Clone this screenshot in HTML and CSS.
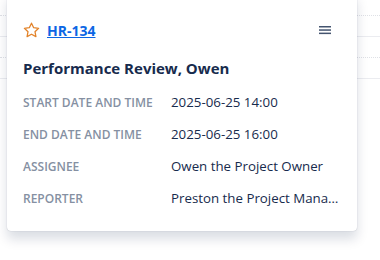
FILE: index.html
```html
<!DOCTYPE html>
<html lang="en">
<head>
    <meta charset="UTF-8">
    <meta name="viewport" content="width=device-width, initial-scale=1.0">
    <title>HR-134</title>

    <link rel="stylesheet" href="styles.css">
</head>
<body>
    <div class="board">
        <div class="board-line dotted"></div>
        <div class="board-line"></div>
        <div class="board-line dotted"></div>
        <div class="board-line"></div>
    </div>

    <div class="card">
        <div class="card-header">
            <div class="card-key">
                <svg class="star" width="17" height="17" viewBox="0 0 16 16">
                    <path d="M8 1.1l2.05 4.25 4.65.6-3.42 3.2.88 4.62L8 11.5l-4.16 2.27.88-4.62L1.3 5.95l4.65-.6z" fill="none" stroke="#e2832a" stroke-width="1.2" stroke-linejoin="round"/>
                </svg>
                <a href="#" class="key-link">HR-134</a>
            </div>
            <button class="menu-btn">
                <svg width="12" height="10" viewBox="0 0 12 10">
                    <rect x="0" y="1" width="12" height="1.5" fill="#44546f"/>
                    <rect x="0" y="4.3" width="12" height="1.5" fill="#44546f"/>
                    <rect x="0" y="7.6" width="12" height="1.5" fill="#44546f"/>
                </svg>
            </button>
        </div>

        <h2 class="card-title">Performance Review, Owen</h2>

        <div class="fields">
            <div class="field-label">Start date and time</div>
            <div class="field-value">2025-06-25 14:00</div>

            <div class="field-label">End date and time</div>
            <div class="field-value">2025-06-25 16:00</div>

            <div class="field-label">Assignee</div>
            <div class="field-value">Owen the Project Owner</div>

            <div class="field-label">Reporter</div>
            <div class="field-value">Preston the Project Manager</div>
        </div>
    </div>
</body>
</html>
```

FILE: styles.css
```css
body {
    margin: 0;
    background-color: #ffffff;
    font-family: "Open Sans", "Noto Sans", sans-serif;
    color: #172b4d;
}

.board {
    padding-top: 15px;
}

.board-line {
    height: 21px;
    border-top: 1px solid #ebecf0;
    box-sizing: border-box;
}

.board-line.dotted {
    border-top: 1px dotted #dfe1e6;
}

.card {
    position: absolute;
    left: 7px;
    top: -8px;
    width: 350px;
    box-sizing: border-box;
    padding: 22px 16px 17px 16px;
    background-color: #ffffff;
    border-radius: 4px;
    box-shadow: 0 8px 12px rgba(9, 30, 66, 0.15), 0 0 1px rgba(9, 30, 66, 0.31);
}

.card-header {
    display: flex;
    justify-content: space-between;
    align-items: center;
    height: 32px;
}

.card-key {
    display: flex;
    align-items: center;
    gap: 7px;
}

.star {
    display: block;
}

.key-link {
    color: #0c66e4;
    font-weight: 700;
    font-size: 14px;
    text-decoration: underline;
}

.menu-btn {
    width: 32px;
    height: 32px;
    display: flex;
    align-items: center;
    justify-content: center;
    padding: 0;
    background: none;
    border: none;
    cursor: pointer;
}

.card-title {
    margin: 12px 0 8px 0;
    font-size: 15px;
    line-height: 20px;
    font-weight: 700;
    color: #172b4d;
}

.fields {
    display: grid;
    grid-template-columns: 140px 1fr;
    column-gap: 8px;
    grid-auto-rows: 32px;
    align-items: center;
}

.field-label {
    font-size: 12px;
    font-weight: 600;
    text-transform: uppercase;
    color: #8590a2;
}

.field-value {
    font-size: 13.3px;
    color: #172b4d;
    white-space: nowrap;
    overflow: hidden;
    text-overflow: ellipsis;
}
```
